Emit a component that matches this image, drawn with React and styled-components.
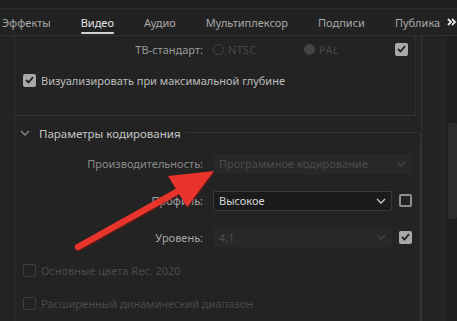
import React from "react";
import styled, { createGlobalStyle } from "styled-components";

const Global = createGlobalStyle`
  html, body {
    margin: 0;
    padding: 0;
    background: #232323;
    overflow: hidden;
  }
  body {
    font-family: "Noto Sans", "Open Sans", sans-serif;
    font-size: 11px;
  }
`;

const tabs = ["Эффекты", "Видео", "Аудио", "Мультиплексор", "Подписи", "Публикации"];

const Page = styled.div`
  position: relative;
  width: 457px;
  height: 321px;
  overflow: hidden;
  background: #232323;
  display: flex;
  flex-direction: column;
`;

const TopStrip = styled.div`
  height: 8px;
  background: #1e1e1e;
  border-bottom: 1px solid #2c2c2c;
`;

const TabBar = styled.div`
  height: 26px;
  display: flex;
  align-items: stretch;
  border-bottom: 1px solid #2f2f2f;
  background: #222222;
`;

const TabList = styled.div`
  display: flex;
  gap: 30px;
  padding-left: 2px;
  width: 440px;
  overflow: hidden;
  white-space: nowrap;
`;

const Tab = styled.div`
  position: relative;
  display: flex;
  align-items: center;
  padding-top: 1px;
  font-size: 11px;
  color: ${(p) => (p.active ? "#e4e4e4" : "#a9a9a9")};

  &::after {
    content: "";
    display: ${(p) => (p.active ? "block" : "none")};
    position: absolute;
    left: 0;
    right: 0;
    bottom: 1px;
    height: 2px;
    border-radius: 1px;
    background: #d2d2d2;
  }
`;

const More = styled.div`
  display: flex;
  align-items: center;
  padding-left: 6px;
`;

const Body = styled.div`
  flex: 1;
  display: flex;
`;

const Gutter = styled.div`
  width: 14px;
  border-right: 1px solid #303030;
`;

const Content = styled.div`
  width: 406px;
  border-right: 1px solid #343434;
  display: flex;
  flex-direction: column;
`;

const Section = styled.div`
  height: 79px;
  border-right: 1px solid #303030;
  border-bottom: 1px solid #333333;
  margin-right: 5px;
  display: flex;
  flex-direction: column;
`;

const Spacer = styled.div`
  width: 25px;
`;

const Scrollbar = styled.div`
  flex: 1;
  background: #1e1e1e;
  display: flex;
  flex-direction: column;
  padding-top: 87px;
`;

const Thumb = styled.div`
  height: 96px;
  margin-left: 1px;
  background: #2c2c2c;
  border-radius: 2px;
`;

const Row = styled.div`
  height: ${(p) => p.h}px;
  margin-top: ${(p) => p.mt || 0}px;
  display: flex;
  align-items: center;
  padding-left: ${(p) => p.pl || 0}px;
`;

const Label = styled.div`
  width: 188px;
  text-align: right;
  padding-right: 10px;
  color: ${(p) => p.color || "#a6a6a6"};
  white-space: nowrap;
`;

const Radio = styled.div`
  display: flex;
  align-items: center;
  gap: 4px;
  width: ${(p) => p.w}px;
  color: #484848;
  letter-spacing: 0.3px;

  &::before {
    content: "";
    width: 11px;
    height: 11px;
    border-radius: 50%;
    background: ${(p) => (p.filled ? "#444444" : "transparent")};
    border: 1px solid #444444;
    box-sizing: border-box;
  }
`;

const Box = styled.div`
  width: 13px;
  height: 13px;
  box-sizing: border-box;
  border-radius: 2px;
  flex-shrink: 0;
  display: flex;
  align-items: center;
  justify-content: center;
  background: ${(p) => (p.checked ? "#a9a9a9" : "transparent")};
  border: ${(p) =>
    p.checked ? "none" : p.disabled ? "1.5px solid #3e3e3e" : "2px solid #8e8e8e"};
`;

const CheckLabel = styled.div`
  margin-left: 5px;
  color: ${(p) => (p.disabled ? "#4a4a4a" : "#bdbdbd")};
  white-space: nowrap;
`;

const Select = styled.div`
  width: ${(p) => p.w}px;
  height: 20px;
  box-sizing: border-box;
  display: flex;
  align-items: center;
  justify-content: space-between;
  padding: 0 5px 0 5px;
  border-radius: 2px;
  background: ${(p) => (p.disabled ? "#282828" : "#1b1b1b")};
  border: 1px solid ${(p) => (p.disabled ? "#282828" : "#3a3a3a")};
  color: ${(p) => (p.disabled ? "#4c4c4c" : "#d6d6d6")};
  white-space: nowrap;
`;

const SideBox = styled.div`
  margin-left: ${(p) => p.ml}px;
  display: flex;
`;

const Header = styled.div`
  height: 18px;
  margin-top: 8px;
  display: flex;
  align-items: center;
  padding-left: 5px;
`;

const HeaderText = styled.div`
  margin-left: 9px;
  color: #c4c4c4;
  font-size: 11.5px;
  white-space: nowrap;
`;

const HeaderLine = styled.div`
  flex: 1;
  align-self: center;
  margin-left: 5px;
  height: 8px;
  margin-top: 6px;
  border-top: 1px solid #333333;
  border-right: 1px solid #333333;
  border-top-right-radius: 3px;
`;

const Group = styled.div`
  flex: 1;
  border-right: 1px solid #333333;
`;

const ArrowLayer = styled.svg`
  position: absolute;
  left: 0;
  top: 0;
  pointer-events: none;
`;

const Chevron = ({ color }) => (
  <svg width="10" height="6" viewBox="0 0 10 6">
    <path d="M1 1 L5 5 L9 1" fill="none" stroke={color} strokeWidth="1.3" />
  </svg>
);

const Check = () => (
  <svg width="9" height="8" viewBox="0 0 9 8">
    <path d="M1 4 L3.5 6.5 L8 1.2" fill="none" stroke="#202020" strokeWidth="1.8" />
  </svg>
);

const CheckBox = ({ checked, disabled }) => (
  <Box checked={checked} disabled={disabled}>
    {checked && <Check />}
  </Box>
);

export default function App() {
  return (
    <Page>
      <Global />
      <TopStrip />
      <TabBar>
        <TabList>
          {tabs.map((t) => (
            <Tab key={t} active={t === "Видео"}>
              {t}
            </Tab>
          ))}
        </TabList>
        <More>
          <svg width="10" height="8" viewBox="0 0 10 8">
            <path d="M1 1 L4 4 L1 7 M5 1 L8 4 L5 7" fill="none" stroke="#e6e6e6" strokeWidth="1.8" />
          </svg>
        </More>
      </TabBar>
      <Body>
        <Gutter />
        <Content>
          <Section>
            <Row h={26}>
              <Label color="#9a9a9a">ТВ-стандарт:</Label>
              <Radio w={91}>NTSC</Radio>
              <Radio w={77} filled>
                PAL
              </Radio>
              <SideBox ml={14}>
                <CheckBox checked />
              </SideBox>
            </Row>
            <Row h={36} pl={8}>
              <CheckBox checked />
              <CheckLabel>Визуализировать при максимальной глубине</CheckLabel>
            </Row>
          </Section>
          <Header>
            <Chevron color="#8a8a8a" />
            <HeaderText>Параметры кодирования</HeaderText>
            <HeaderLine />
          </Header>
          <Group>
            <Row h={29} mt={7}>
              <Label color="#8a8a8a">Производительность:</Label>
              <Select w={199} disabled>
                <span>Программное кодирование</span>
                <Chevron color="#444444" />
              </Select>
            </Row>
            <Row h={45}>
              <Label>Профиль:</Label>
              <Select w={179}>
                <span>Высокое</span>
                <Chevron color="#c8c8c8" />
              </Select>
              <SideBox ml={7}>
                <CheckBox />
              </SideBox>
            </Row>
            <Row h={28}>
              <Label>Уровень:</Label>
              <Select w={179} disabled>
                <span>4,1</span>
                <Chevron color="#444444" />
              </Select>
              <SideBox ml={7}>
                <CheckBox checked />
              </SideBox>
            </Row>
            <Row h={38} pl={8}>
              <CheckBox disabled />
              <CheckLabel disabled>Основные цвета Rec. 2020</CheckLabel>
            </Row>
            <Row h={28} pl={8}>
              <CheckBox disabled />
              <CheckLabel disabled>Расширенный динамический диапазон</CheckLabel>
            </Row>
          </Group>
        </Content>
        <Spacer />
        <Scrollbar>
          <Thumb />
        </Scrollbar>
      </Body>
      <ArrowLayer width="457" height="321" viewBox="0 0 457 321">
        <g transform="translate(1.2 1.5)" opacity="0.45">
          <line x1="78" y1="247" x2="180" y2="190" stroke="#7a1712" strokeWidth="6.5" strokeLinecap="round" />
          <polygon points="214,171 168,176 187,207" fill="#7a1712" />
        </g>
        <line x1="78" y1="247" x2="180" y2="190" stroke="#e8342b" strokeWidth="6.5" strokeLinecap="round" />
        <polygon points="214,171 168,176 187,207" fill="#e8342b" />
      </ArrowLayer>
    </Page>
  );
}
